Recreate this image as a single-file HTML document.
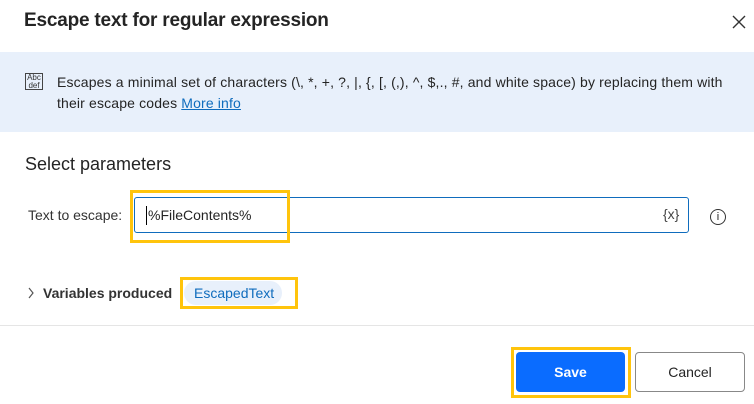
<html><head><style>
body{margin:0;width:754px;height:404px;background:#fff;font-family:"Liberation Sans",sans-serif;color:#242424;position:relative;overflow:hidden}
.a{position:absolute}
</style></head><body>
<div class="a" style="left:24px;top:10px;font-size:19px;font-weight:bold;letter-spacing:-0.2px">Escape text for regular expression</div>
<svg class="a" style="left:732px;top:15px" width="14" height="14"><path d="M1 1L13 13M13 1L1 13" stroke="#333" stroke-width="1.4"/></svg>
<div class="a" style="left:0;top:52px;width:754px;height:80px;background:#e8f0fb"></div>
<div class="a" style="left:25px;top:73px;width:18px;height:17px;border:1px solid #444;font-size:8px;line-height:8px;text-align:center;color:#333;box-sizing:border-box;padding-top:0">Abc<br>def</div>
<div class="a" style="left:57px;top:72px;width:690px;font-size:14px;line-height:21px;letter-spacing:0.15px">Escapes a minimal set of characters (\, *, +, ?, |, {, [, (,), ^, $,., #, and white space) by replacing them with<br>their escape codes <span style="color:#0f6cbd;text-decoration:underline">More info</span></div>
<div class="a" style="left:25px;top:154px;font-size:18px">Select parameters</div>
<div class="a" style="left:28px;top:207px;font-size:14px;color:#333">Text to escape:</div>
<div class="a" style="left:134px;top:197px;width:555px;height:36px;border:1px solid #0f6cbd;border-radius:3px;box-sizing:border-box"></div>
<div class="a" style="left:146px;top:206px;width:1px;height:19px;background:#000"></div>
<div class="a" style="left:148px;top:207px;font-size:14px">%FileContents%</div>
<div class="a" style="left:663px;top:206px;font-size:14px;color:#444">{x}</div>
<div class="a" style="left:710px;top:209px;width:16px;height:16px;border:1.3px solid #333;border-radius:50%;box-sizing:border-box;font-size:11px;text-align:center;line-height:14px">i</div>
<div class="a" style="left:130px;top:190px;width:160px;height:53px;border:3px solid #ffc40c;box-sizing:border-box"></div>
<svg class="a" style="left:27px;top:287px" width="8" height="12"><path d="M2 1L6 6L2 11" stroke="#555" fill="none" stroke-width="1.2"/></svg>
<div class="a" style="left:43px;top:285px;font-size:14px;font-weight:bold;color:#333">Variables produced</div>
<div class="a" style="left:184px;top:281px;width:98px;height:24px;background:#e8f0fb;border-radius:12px"></div>
<div class="a" style="left:194px;top:285px;font-size:14px;color:#0f6cbd">EscapedText</div>
<div class="a" style="left:180px;top:277px;width:118px;height:32px;border:3px solid #ffc40c;box-sizing:border-box"></div>
<div class="a" style="left:0;top:325px;width:754px;height:1px;background:#e5e5e5"></div>
<div class="a" style="left:516px;top:352px;width:109px;height:40px;background:#0a6cff;border-radius:4px;color:#fff;font-weight:bold;font-size:14px;text-align:center;line-height:40px">Save</div>
<div class="a" style="left:511px;top:347px;width:120px;height:51px;border:3px solid #ffc40c;box-sizing:border-box"></div>
<div class="a" style="left:635px;top:352px;width:110px;height:40px;border:1px solid #888;border-radius:4px;box-sizing:border-box;font-size:14px;text-align:center;line-height:38px">Cancel</div>
</body></html>
